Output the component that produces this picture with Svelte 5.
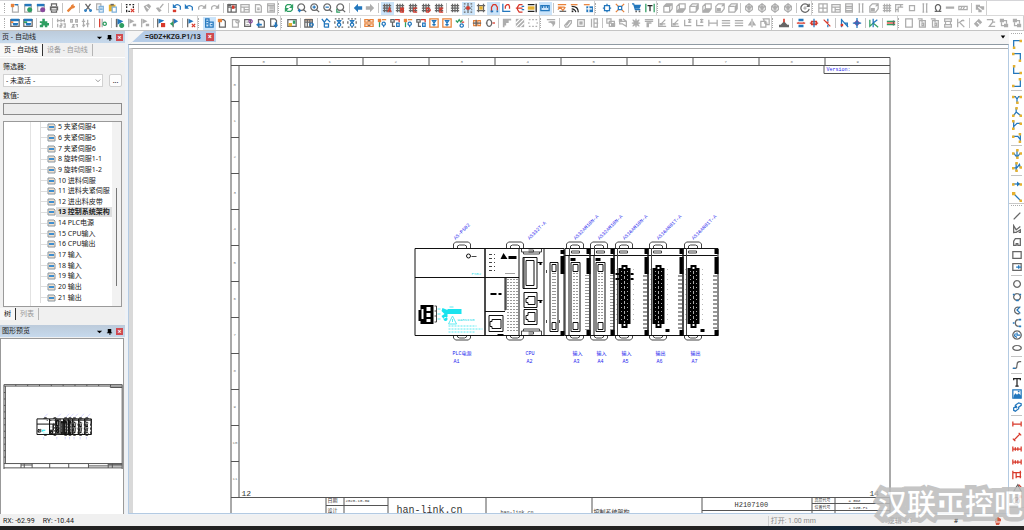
<script>
  // lower case letter = stroke, upper case = fill
  const palette = {
    b: '#2377bd', l: '#7fb2dc', g: '#adadad', d: '#666666', k: '#222222',
    r: '#d8392b', o: '#e8823a', y: '#e5b02f', n: '#2e9e62', p: '#8a4a9e', w: '#ffffff'
  };

  const grid = 'M3 1v10M6 1v10M9 1v10M1 3h10M1 6h10M1 9h10';
  const page = 'M3 2h5l2 2v7H3z';
  const glass = 'M5 1a4 4 0 1 0 .1 0M8 8l3 3';

  const icons = {
    newPage: [['g', page], ['O', 'M1 1h4v4H1z'], ['b', 'M6 2h4']],
    openPage: [['g', 'M2 2h8v9H2z'], ['B', 'M2 1h8v3H2z'], ['N', 'M8 5a3 3 0 1 0 .1 0']],
    closePage: [['g', 'M2 2h8v8H2z'], ['B', 'M1 1h9v3H1z'], ['P', 'M8 5a3 3 0 1 0 .1 0']],
    print: [['D', 'M1 4h10v5H1z'], ['d', 'M3 4V1h6v3M3 9v2h6V9'], ['w', 'M3 7h6']],
    wrench: [['y', 'M2 10l5-5'], ['O', 'M6 3l3-2v2l2 1-1 2-3 1-4 4-2-2 5-5z']],
    cut: [['d', 'M3 1l5 7M9 1L4 8'], ['b', 'M3 8a1 1 0 1 0 .1 0M9 8a1 1 0 1 0 .1 0']],
    copy: [['g', 'M2 1h5v7H2z'], ['W', 'M5 4h5v7H5z'], ['l', 'M5 4h5v7H5zM6 6h3M6 8h3']],
    paste: [['Y', 'M1 2h8v8H1z'], ['D', 'M3 1h4v2H3z'], ['W', 'M5 5h5v6H5z'], ['l', 'M5 5h5v6H5z']],
    marquee: [['k', 'M1 2h2M5 2h2M9 2h2M2 4v2M2 8v3M10 4v2M4 10h2'], ['r', 'M7 7l4 4M11 7l-4 4']],
    brush: [['G', 'M2 4l6-3 3 3-5 7-2-3z'], ['w', 'M5 4l3 3']],
    brush2: [['G', 'M1 6l3-1 4 4-3 2z'], ['g', 'M6 6l4-5']],
    undo: [['b', 'M3 5q3-4 7 0v4'], ['B', 'M1 1v6h5z']],
    undoList: [['b', 'M3 4q3-4 7 0v4'], ['B', 'M1 1v5h5z'], ['R', 'M1 8h4v3H1z']],
    redo: [['g', 'M9 5q-4-4-7 0v3'], ['G', 'M11 1v6H6z']],
    window: [['d', 'M1 2h10v9H1zM1 5h10M5 5v6'], ['D', 'M1 1h4v3H1z'], ['R', 'M6 3h3v4H6z']],
    windowOff: [['g', 'M1 2h10v9H1zM1 5h10M5 5v6M5 8h6']],
    pageOff: [['g', page], ['g', 'M5 6h3M5 8h3']],
    list: [['g', 'M2 1h8v10H2zM2 3h8M4 5h5M4 7h5M4 9h5']],
    refresh: [['n', 'M2 6V4l2-2h4l2 2M10 6v2l-2 2H4L2 8'], ['N', 'M11 1v5H6zM1 11V6h5z']],
    zoom: [['d', glass]],
    zoomWin: [['d', glass], ['b', 'M1 9h4M3 7v4']],
    zoomIn: [['d', glass], ['b', 'M3 5h4M5 3v4']],
    zoomOut: [['d', glass], ['b', 'M3 5h4']],
    zoomFit: [['d', glass], ['n', 'M1 7v4h4']],
    back: [['B', 'M1 6l5-5v3h5v4H6v3z']],
    forward: [['G', 'M11 6L6 1v3H1v4h5v3z']],
    gridA: [['d', grid], ['r', 'M7 11l2-5 2 5']],
    gridB: [['d', grid], ['r', 'M7 6h3v5H7zM7 8h3']],
    gridC: [['d', grid], ['r', 'M11 6H7v5h4']],
    gridD: [['d', grid], ['r', 'M7 6h2l2 2v1l-2 2H7z']],
    gridE: [['d', grid], ['r', 'M11 6H7v5h4M7 8h3']],
    grid: [['d', grid]],
    snap: [['d', 'M1 1h2M5 1h2M9 1h2M1 4h1M10 4h1M1 8h1M10 8h1M1 11h2M5 11h2M9 11h2M6 2v8M2 6h8'], ['R', 'M4 4h4v4H4z']],
    objSnap: [['d', 'M3 1v10M9 1v10M1 3h10M1 9h10'], ['Y', 'M4 4h4v4H4z']],
    magnet: [['r', 'M3 11V5l2-3h3l2 3v4'], ['B', 'M2 9h3v2H2zM9 9h2v2H9z']],
    ortho: [['b', 'M1 1v9h9'], ['r', 'M4 7V4l2-2h2l1 2v3']],
    clip: [['r', 'M9 2H5L3 5v3l2 3h4M1 6h8'], ['b', 'M8 4h3M8 8h3']],
    ruler: [['k', 'M1 2h8M1 10h8M11 1v10'], ['Y', 'M1 4h8v4H1z']],
    rulerBlue: [['b', 'M1 3h10v6H1zM3 3v3M6 3v3M9 3v3']],
    wave: [['o', 'M1 2h10M1 5h8M1 8l3-3 3 4 3-4'], ['d', 'M3 10h8']],
    feed: [['o', 'M1 2h8'], ['k', 'M2 4q8 0 8 7M2 7q4 0 5 4'], ['K', 'M2 9h2v2H2z']],
    table: [['B', 'M4 4h8v7H4z'], ['w', 'M4 7h7M7 4v7'], ['o', 'M1 2h7']],
    pin: [['b', 'M3 3h6v6H3zM6 1v2M6 9v2M1 6h2M9 6h2']],
    pinOut: [['o', 'M1 1l3 3M11 1L8 4M1 11l3-3M11 11L8 8'], ['b', 'M4 4h4v4H4z']],
    cart: [['B', 'M2 2h9L9 7H4z'], ['b', 'M0 1h2l2 7h6'], ['D', 'M4 9h2v2H4zM8 9h2v2H8z']],
    text: [['n', 'M1 1v10M11 1v10'], ['k', 'M3 3h6M6 3v7']],
    cube: [['g', 'M1 4l3-3h7v6l-3 4H1zM1 4h7v7M8 4l3-3'], ['G', 'M1 4l3-3h7L8 4z']],
    cubeTop: [['g', 'M1 4l3-3h7v6l-3 4H1zM4 1v6h7M1 11l3-4'], ['G', 'M1 11l3-4h7l-3 4z']],
    cubeSide: [['g', 'M1 4l3-3h7v6l-3 4H1zM1 4h7'], ['G', 'M8 4l3-3v6l-3 4z']],
    cubeFront: [['g', 'M1 4l3-3h7v6l-3 4H1zM8 4l3-3'], ['G', 'M2 6h5v4H2z']],
    hex: [['g', 'M6 1l4 3v4l-4 3-4-3V4zM2 4l4 2 4-2M6 6v5'], ['G', 'M4 4l2-2 2 2v4H4z']],
    rotate: [['d', 'M10 3a5 5 0 1 0 1 4M11 1v3H8'], ['g', 'M4 6h4M6 4v4']],
    cells: [['g', 'M1 1h10v10H1zM6 1v10M1 6h10']],
    rows: [['g', 'M2 1h8v10H2zM2 4h8M2 6h8M2 9h8']],
    bars: [['g', 'M4 1v10M8 1v10M3 1h2M7 1h2M3 11h2M7 11h2']],
    gridOff: [['g', grid]],
    angleOff: [['g', 'M11 2H2v9M11 5H5v6M8 2v3M2 8h3']],
    boxOff: [['g', 'M3 3h6v6H3z']],
    omega: [['d', 'M2 10h3L3 7V4l2-2h2l2 2v3l-2 3h3']],
    railOff: [['g', 'M1 6h10M1 5h10']],
    hatchOff: [['g', 'M1 4h10v4H1zM3 8l2-4M6 8l2-4']],
    blockOff: [['G', 'M1 2h5v2h5v4H8v3H4V8H1z'], ['w', 'M4 5l4 3']],
    cartPage: [['d', 'M1 2h10v8H1z'], ['B', 'M1 1h10v3H1zM3 6h7L9 9H4z'], ['O', 'M1 4h3v2H1z']],
    cartGreen: [['d', 'M1 2h10v8H1z'], ['B', 'M1 1h10v3H1zM3 6h7L9 9H4z'], ['N', 'M1 4h4v2H1z']],
    puzzle: [['N', 'M1 4h3V1h3v3h3v2h2v3h-2v2H7V9H5v2H1V8h2V6H1z']],
    numOff: [['g', 'M2 1v4M1 3h4M6 1v4M10 1v4M6 3h4M2 7v4M5 7h2v2H5v2h2M9 7h2v4H9']],
    dotOff: [['g', 'M2 2h2v3H2zM8 2h2v3H8zM4 8h2l-2 3h3M8 8h2v3']],
    sortOff: [['g', 'M3 1v9M1 4h4M8 2v9M6 7h4M2 8l1 2 2-2']],
    rev: [['g', 'M5 1v10'], ['r', 'M2 1v10'], ['n', 'M8 5a2 2 0 1 0 .1 0']],
    flag: [['D', 'M1 1h2v10H1z'], ['B', 'M3 1l7 3-7 4z'], ['N', 'M8 6a3 3 0 1 0 .1 0']],
    flagOff: [['g', 'M2 1v10'], ['G', 'M3 1l6 3-6 3zM7 7h4v3H7z']],
    flagRed: [['d', 'M2 1v10'], ['B', 'M3 1l7 2-7 4z'], ['R', 'M6 6h5v5H6z']],
    flagGo: [['d', 'M5 1v10'], ['B', 'M6 1l5 3-5 3z'], ['N', 'M1 7l4-3v6z']],
    flagX: [['d', 'M2 1v10'], ['B', 'M3 1l6 3-6 3z'], ['r', 'M7 7l4 4M11 7l-4 4']],
    device: [['b', 'M2 1h4v10H2zM6 5h5v6H6M3 4h2M3 7h2M8 8h2']],
    pageStar: [['d', page], ['O', 'M1 1h5v4H1z']],
    pageDot: [['g', page], ['g', 'M9 2a2 2 0 1 0 .1 0']],
    pagePurple: [['d', 'M2 2h7v8H2z'], ['p', 'M9 2a2 2 0 1 0 .1 0'], ['g', 'M4 5h3M4 8h3']],
    pageBack: [['d', page], ['B', 'M0 8l4-3v2h3v2H4v2z']],
    pageDown: [['d', 'M2 1h5l2 2v7H2z'], ['B', 'M8 12L5 8h2V5h2v3h2z']],
    image: [['d', 'M1 2h10v8H1z'], ['Y', 'M2 6h4v4H2z'], ['N', 'M7 3h3v4H7z']],
    rack: [['O', 'M1 1h9v2H1z'], ['d', 'M1 2h9v9H1zM4 2v9M7 2v9M1 5h9'], ['b', 'M9 6a2 2 0 1 0 .1 0']],
    valve: [['b', 'M1 1l3 4 3-4 4 4M4 5v6M4 7h5v4H4']],
    valveBox: [['d', 'M1 1h2M5 1h2M9 1h2M1 11h2M5 11h2M9 11h2M1 4v3M11 4v3'], ['b', 'M4 3l2 3 2-3zM6 6a2 2 0 1 0 .1 0']],
    blocks: [['o', 'M1 2h4v3H1zM7 2h4v3H7zM1 7h4v3H1zM7 7h4v3H7z'], ['d', 'M5 3h2M5 9h2']],
    tree1: [['O', 'M1 1h4v4H1z'], ['n', 'M3 5v6'], ['o', 'M6 2h5'], ['b', 'M8 5a2 2 0 1 0 .1 0M8 9v2']],
    tree2: [['d', 'M1 2h4v3H1zM3 5v5h3'], ['r', 'M6 2h5v3'], ['b', 'M8 6h3v4H8z']],
    orangeBox: [['o', 'M1 1h10v10H1z'], ['b', 'M4 3l2 3 2-3zM6 6v4M4 8h4']],
    link: [['n', 'M1 3l2 2 2-3 2 3 2-3'], ['b', 'M8 7a2 2 0 1 0 .1 0'], ['r', 'M8 5h3']],
    coil: [['o', 'M2 3h3v6H2zM7 3h3v6H7z'], ['d', 'M1 6h10M5 2v8']],
    coil2: [['d', 'M1 6h2M5 2a3 4 0 1 0 .1 0'], ['r', 'M9 6h3']],
    cornerOff: [['G', 'M1 1h10v2H8v3H5v3H3v2H1z']],
    hatch: [['G', 'M1 1h10v10H1z'], ['w', 'M1 6l5-5M1 11L11 1M6 11l5-5']],
    dashOff: [['g', 'M1 2h2M5 2h2M9 2h2M1 10h2M5 10h2M9 10h2M1 5v2M11 5v2']],
    filterOff: [['g', 'M1 2h10M3 5h7'], ['G', 'M4 4h7v3L8 11V8z']],
    clipOff: [['g', 'M2 9l5-6h3v3l-4 5H3zM4 9l4-5']],
    stackOff: [['g', 'M2 2h8v8H2z'], ['G', 'M4 4h4v4H4z']],
    pinOff: [['g', 'M3 1v10M6 1h4v10H6zM6 6h5']],
    groupOff: [['g', 'M1 1h5v5H1zM4 4h6v6H4z'], ['G', 'M6 6h5v4H6z']],
    loopOff: [['g', 'M2 2v5h4M4 4h6v6l-5-3M6 1l4 3'], ['G', 'M1 1h4v4H1z']],
    crossOff: [['g', 'M2 2l8 8M10 2l-8 8M6 1v10M1 6h10'], ['G', 'M3 3h6v6H3z']],
    alignOff: [['g', 'M1 2h10M1 4h10'], ['G', 'M3 5h6v2H6v4H3z']],
    lineOff: [['g', 'M2 1v9h9M5 7l5-5M7 7h3'], ['G', 'M3 6h4v3H3z']],
    trimOff: [['g', 'M2 2v7h8M6 2h4M6 5h4M8 1v5']],
    dimOff: [['g', 'M1 2v8M11 2v8M1 6h10']],
    parOff: [['g', 'M1 3h10M1 6h10M1 9h10']],
    mirrorOff: [['g', 'M6 1v10'], ['G', 'M1 9l4-6v6zM11 9L7 3v6z']],
    dupOff: [['g', 'M1 4h6v7H1zM4 1h7v7H7zM5 6h4']],
    mount: [['D', 'M0 8h12v3H0zM2 8l4-4 4 4z'], ['R', 'M5 1h2v4H5z']],
    wire: [['B', 'M3 1h6v3H3zM3 8h6v3H3z'], ['r', 'M1 6h10M3 5v2M9 5v2']],
    wireRed: [['r', 'M1 6h10M3 4h6v4H3z'], ['b', 'M6 1v10']],
    wireX: [['r', 'M2 2l8 8M5 5h3'], ['b', 'M7 1v3M7 8v3']],
    cable: [['b', 'M3 1v10M3 2l8 9M6 6h4v4'], ['R', 'M2 7h3v3H2z']],
    diamond: [['P', 'M6 2l4 4-4 4-4-4z'], ['b', 'M6 0v12M1 6h10']],
    harness: [['n', 'M1 2v8l4-4 6 5'], ['b', 'M5 1v10M5 6l5-4']],
    rail: [['n', 'M1 4h10M1 8h10'], ['r', 'M1 6h10'], ['d', 'M9 3v6']],
    sheetOff: [['g', 'M2 1h8v10H2z']],
    pageLOff: [['g', 'M3 3h7v8H3zM1 1h5v4M6 6h2v3H6z']],
    noteOff: [['g', 'M2 1h8v3H2zM3 4h6v4H3zM2 8h8v3H2z']],
    cutOff: [['g', 'M2 1v10M3 6l6-4M5 6l5 5M6 3h4']],
    tagOff: [['G', 'M1 7l6-6 4 4-6 6z'], ['w', 'M5 5l3 3']],
    treeOff: [['g', 'M1 2h7v3l-4 5h7M8 5h3']],
    nodesOff: [['G', 'M1 1h5v4H1zM6 7h5v4H6z'], ['g', 'M6 3h3v4M3 5v4h3']],
    // vertical bar
    cornerTL: [['b', 'M2 11V2h9'], ['Y', 'M1 9h3v3H1zM9 1h3v3H9z']],
    cornerTR: [['b', 'M1 2h9v9'], ['Y', 'M0 1h3v3H0zM8 9h3v3H8z']],
    cornerBL: [['b', 'M2 1v9h9'], ['Y', 'M1 0h3v3H1zM9 8h3v3H9z']],
    cornerBR: [['b', 'M1 10h9V1'], ['Y', 'M0 8h3v3H0zM8 0h3v3H8z']],
    teeDown: [['b', 'M2 3h2l2 3 2-3h2M6 6v5'], ['Y', 'M0 2h3v3H0zM9 2h3v3H9zM5 9h3v3H5z']],
    teeUp: [['b', 'M5 1v5l5 4M5 6l-3 4'], ['Y', 'M4 0h3v3H4zM0 9h3v3H0zM9 9h3v3H9z']],
    teeRight: [['b', 'M2 1v10M2 8l4-4h5'], ['Y', 'M0 0h3v3H0zM9 3h3v3H9zM0 9h3v3H0z']],
    teeLeft: [['b', 'M10 1v10M10 8L7 4H1'], ['Y', 'M0 3h3v3H0zM8 0h3v3H8zM8 9h3v3H8z']],
    downArrow: [['b', 'M6 1v8M2 5l4 5 4-5'], ['Y', 'M5 0h3v3H5zM0 4h3v3H0zM9 4h3v3H9zM5 9h3v3H5z']],
    jump: [['b', 'M5 1v10M5 8l4-5 1 4M2 7h3'], ['Y', 'M4 0h3v3H4zM0 6h3v3H0zM9 5h3v3H9zM4 9h3v3H4z']],
    rightArrow: [['b', 'M1 6h9'], ['B', 'M6 3l4 3-4 3z'], ['Y', 'M0 5h3v3H0zM9 5h3v3H9z']],
    diagonal: [['b', 'M2 2l8 8'], ['Y', 'M0 0h4v4H0zM9 9h3v3H9z']],
    line: [['d', 'M2 10l8-8']],
    polyline: [['d', 'M2 11V2l3 5 5-4M2 10h3l5-3v3H8']],
    polygon: [['d', 'M4 2h6v8H7V8H5v2H2V5z']],
    rect: [['d', 'M1 2h10v8H1z']],
    rectCenter: [['d', 'M1 2h10v8H1z'], ['b', 'M5 6h6M8 4v4']],
    circle: [['d', 'M6 2a4 4 0 1 0 .1 0']],
    circle3: [['d', 'M6 2a4 4 0 1 0 .1 0'], ['B', 'M1 2h2v2H1zM9 2h2v2H9zM5 9h3v2H5z']],
    arcC: [['d', 'M9 3a4 4 0 1 0 0 7'], ['b', 'M10 2L6 6l4 4']],
    arc: [['d', 'M8 2a4 4 0 1 0 0 8'], ['B', 'M8 1h3v2H8zM8 9h3v2H8zM1 5h2v2H1z']],
    sector: [['d', 'M6 1a5 5 0 1 0 .1 0'], ['b', 'M6 3v3h4M4 4l-1 3 3 2']],
    ellipse: [['d', 'M6 3a5 3 0 1 0 .1 0']],
    spline: [['d', 'M1 10h3q2 0 2-4t3-4h2'], ['b', 'M1 10h3']],
    letterT: [['k', 'M2 4V2h8v2M6 2v9M4 11h4']],
    picture: [['b', 'M1 1h10v10H1z'], ['B', 'M2 8l2-3 2 2 2-2 3 3v3H2zM7 2h2v2H7z']],
    chain: [['b', 'M6 5L2 7v3l2 1 4-3V6M6 7L4 6V4l4-3 3 1v2L7 7']],
    dim: [['r', 'M1 3v6M11 3v6M1 6h10']],
    dimSlant: [['r', 'M2 10l8-8M1 8l3 3M8 1l3 3']],
    dimCont: [['r', 'M1 3v6M11 3v6M1 6h10M4 4v4M7 4v4']],
    dimStep: [['r', 'M1 1v10M1 3h10M5 3v7M5 8h6M10 1v9']],
    dimAngle: [['d', 'M2 10l5-8 4 8z'], ['r', 'M8 2l3 3']],
    dimRadius: [['d', 'M5 3a4 4 0 1 0 .1 0'], ['r', 'M5 7l6-6M8 1h3v3']]
  };

  // "|" is a separator, a leading "*" marks a pressed button
  const rowOne = [
    'newPage openPage closePage print | wrench | cut copy paste | marquee | brush brush2 | undoList undo redo redo | window windowOff pageOff list',
    'refresh zoomWin zoomIn zoomOut zoomFit | back forward | *gridA gridB gridC gridD gridE | grid *snap objSnap *magnet ortho clip ruler *rulerBlue | wave feed table',
    'pin pinOut | cart text',
    'cube cubeTop cubeSide cubeTop cubeFront cubeSide | hex hex hex hex | rotate',
    'cells windowOff rows bars cubeFront gridOff angleOff boxOff bars omega railOff hatchOff | blockOff'
  ];
  const rowTwo = [
    'cartPage cartGreen | puzzle | numOff dotOff sortOff | rev | flag flagOff flagOff | flagRed flagGo | flagX',
    '*device pageStar pageDot pagePurple pageBack pageDown',
    'image | rack | valve valveBox valveBox | blocks tree1 tree2 tree1 tree2 orangeBox orangeBox link | coil coil2 | cornerOff hatch dashOff',
    'filterOff | clipOff stackOff pinOff | groupOff loopOff crossOff alignOff lineOff lineOff trimOff trimOff dimOff parOff parOff mirrorOff dupOff',
    'mount | wire wireRed wireX | cable diamond | harness | rail',
    'sheetOff pageLOff pageLOff noteOff cutOff | tagOff treeOff nodesOff nodesOff'
  ];
  const sideBar = [
    'cornerTL cornerTR cornerBL cornerBR | teeDown teeUp teeRight teeLeft | downArrow jump | rightArrow diagonal',
    'line polyline polygon rect rectCenter | circle circle3 arcC arc sector ellipse | spline | letterT picture chain | dim dimSlant dimCont dimCont dimStep dimAngle dimRadius'
  ];

  const pages = [
    '5 夹紧伺服4', '6 夹紧伺服5', '7 夹紧伺服6', '8 旋转伺服1-1', '9 旋转伺服1-2',
    '10 进料伺服', '11 进料夹紧伺服', '12 进出料皮带', '13 控制系统架构', '14 PLC电源',
    '15 CPU输入', '16 CPU输出', '17 输入', '18 输入', '19 输入', '20 输出', '21 输出'
  ];
  let selected = $state('13 控制系统架构');
  let filter = $state('- 未激活 -');
  let value = $state('');

  const hooks = [453, 506, 566, 590, 615, 649, 684];
  const narrow = [{ x: 564, w: 25 }, { x: 589, w: 24 }];
  const wide = [{ x: 613, w: 34 }, { x: 647, w: 35 }, { x: 682, w: 35 }];
  const tags = [
    { x: 452, tx: 455, type: 'AS-PS02', name: 'PLC电源', ref: 'A1' },
    { x: 525, tx: 529, type: 'AS332T-A', name: 'CPU', ref: 'A2' },
    { x: 572, tx: 575, type: 'AS32AM10N-A', name: '输入', ref: 'A3' },
    { x: 596, tx: 599, type: 'AS32AM10N-A', name: '输入', ref: 'A4' },
    { x: 621, tx: 624, type: 'AS16AM10N-A', name: '输入', ref: 'A5' },
    { x: 655, tx: 658, type: 'AS16AN01T-A', name: '输出', ref: 'A6' },
    { x: 690, tx: 693, type: 'AS16AN01T-A', name: '输出', ref: 'A7' }
  ];
  const ten = [0, 1, 2, 3, 4, 5, 6, 7, 8, 9];
  const twelve = [...ten, 10, 11];
</script>

{#snippet icon(name)}
  <svg class="icon" viewBox="0 0 12 12" aria-hidden="true">
    {#each icons[name] as [tone, d]}
      {@const color = palette[tone.toLowerCase()]}
      {@const filled = tone !== tone.toLowerCase()}
      <path {d} fill={filled ? color : 'none'} stroke={filled ? 'none' : color} />
    {/each}
  </svg>
{/snippet}

{#snippet toolbar(items)}
  <div class="toolbar" role="toolbar">
    <span class="grip"></span>
    {#each items.split(' ') as item}
      {#if item === '|'}
        <span class="sep"></span>
      {:else}
        <button class="tool" class:on={item[0] === '*'} aria-label={item.replace('*', '')}>
          {@render icon(item.replace('*', ''))}
        </button>
      {/if}
    {/each}
  </div>
{/snippet}

{#snippet titleBar(title)}
  <div class="title-bar">
    <h2>{title}</h2>
    <button aria-label="menu"><svg viewBox="0 0 8 8"><path d="M1 3h6L4 6z" /></svg></button>
    <button aria-label="pin"><svg viewBox="0 0 8 8"><path d="M2 1h4v4H2zM1 5h6v1H1zM4 6h1v2H4z" /></svg></button>
    <button class="close" aria-label="close">×</button>
  </div>
{/snippet}

{#snippet plan()}
  <g class="frame">
    <path d="M230.5 530V57.5h659V530M230.5 65.5h659M238.5 65.5v432M230.5 497.5h659M823.5 65.5v8h66" />
    {#each ten.slice(1) as n}
      <path d="M{230.5 + n * 66} 57.5v8" />
    {/each}
    {#each twelve.slice(1) as n}
      <path d="M230.5 {65.5 + n * 36}h8" />
    {/each}
    <path d="M325.5 497v25M343.5 497v25M387.5 497v25M485.5 497v25M591.5 497v25M701.5 497v25M811.5 497v25M834.5 497v25M325.5 505.5h62M811.5 503.5h78M701.5 510.5h188M230.5 521.5h659" />
  </g>

  <g class="plc">
    {#each hooks as x}
      <path class="thin" d="M{x} 248v-4l2-2h13l2 2v4M{x + 4} 248v-2l2-1h5l2 1v2M{x} 335v3l2 2h13l2-2v-3M{x + 4} 335v2l2 1h5l2-1v-2" />
    {/each}
    <!-- power supply -->
    <path d="M414.5 248.5h70v87h-70zM414.5 277.5h70" />
    <circle cx="468" cy="256" r="2" />
    <path class="thin" d="M471 256.5h5" />
    <path class="solid" d="M420 305h13v19h-13v-3h-2v-11h2z" />
    <path class="hole" d="M426 307h4v4h-4zM426 313h4v4h-4zM426 319h4v3h-4zM421 309h2v10h-2z" />
    <path class="thin" d="M434 306h2v16h-2M434 311h2M434 316h2" />
    <!-- cpu -->
    <path d="M484.5 248.5h34v87h-34zM484.5 277.5h34M504.5 277.5v33M484.5 311.5h20M505.5 277v33" />
    <path class="solid" d="M503 253l4 6h-7zM508 256h8v3h-8zM490 293h6v2h-6zM498 293h3v2h-3zM497 334h6v2h-6z" />
    <path class="thin" stroke-dasharray="1 3" d="M489 254v19M490 254v19M491 254v19M494 254v19" />
    <path class="thin" stroke-dasharray="1 1" d="M505 273.5h9" />
    <path stroke-dasharray="1 2" class="pins" d="M507.5 279v54M510.5 279v54M513.5 279v54M516.5 279v54" />
    <path d="M488.5 315.5h14v16h-14zM491.5 319.5h9v9h-9v-2h-2v-5h2z" />
    <path d="M518.5 248.5h45v87h-45M543.5 248v87" />
    <path class="thin" d="M521 249v3h20v-3M523 252v2h16v-2M521 335v-4h20v4M523 331v-2h16v2M528 250h5v2h-5M528 332h5v2h-5" />
    <path d="M522.5 257.5h14v31h-14zM525.5 260.5h8v25h-8zM523.5 257.5v31" />
    <path d="M523.5 292.5h13v15h-13zM527.5 296.5h7v8h-7v-2h-2v-4h2zM523.5 309.5h13v15h-13zM527.5 312.5h7v9h-7v-2h-2v-4h2z" />
    <path class="solid" d="M537 262h5v1h-5zM539 262h2v3h-2zM537 300h5v1h-5zM539 300h2v3h-2zM560 250h4v4h-4zM560 256h4v18h-4zM560 331h4v5h-4z" />
    <path d="M549.5 262.5h8v69h-8zM551.5 264.5h4v7h-4zM551.5 322.5h4v7h-4z" />
    <path class="pins" stroke-dasharray="1 2" d="M552.5 273v48M554.5 273v48" />
    <path class="thin" d="M546 270v3M546 320v3M559 320v3" />

    {#each narrow as m}
      <path d="M{m.x}.5 248.5h{m.w}v87h-{m.w}zM{m.x} 255.5h{m.w}M{m.x + 4}.5 255v80" />
      <path class="thin" d="M{m.x + 5} 248v7M{m.x + 7} 251h8v2h-8z" />
      <path d="M{m.x + 6}.5 262.5h9v69h-9zM{m.x + 8}.5 264.5h5v7h-5zM{m.x + 8}.5 322.5h5v7h-5z" />
      <path class="pins" stroke-dasharray="1 2" d="M{m.x + 9}.5 273v48M{m.x + 12}.5 273v48M{m.x + 21}.5 275v56M{m.x + 23}.5 275v56" />
      <path class="solid" d="M{m.x + 6} 258h5v3h-5zM{m.x + m.w - 3} 249h4v5h-4zM{m.x + m.w - 3} 258h4v16h-4zM{m.x + m.w - 3} 330h4v6h-4z" />
    {/each}

    {#each wide as m, i}
      <path d="M{m.x}.5 248.5h{m.w}v87h-{m.w}zM{m.x} 255.5h{m.w}" />
      <path class="thin" d="M{m.x + 4} 248v87M{m.x + 6} 251h8v2h-8z" />
      <path class="faint" stroke-dasharray="1 4" d="M{m.x + 3} 269v54M{m.x + 20} 269v54" />
      <path class="solid" d="M{m.x + 8} 265h6v3h3v56h-3v4h-6v-4H{m.x + 5}v-56h3z" />
      <path class="gaps" stroke-dasharray="1 3" d="M{m.x + 8} 271v52M{m.x + 14} 271v52" />
      <path class="hole" d="M{m.x + 10} 267h2v2h-2zM{m.x + 10} 324h2v2h-2z" />
      <path class="gaps" stroke-dasharray="3 2" d="M{m.x + 11} 271v52" />
      <path class="pins" stroke-dasharray="2 2" d="M{m.x + m.w - 4}.5 275v56M{m.x + m.w - 2}.5 275v56" />
      <path class="solid" d="M{m.x + m.w - 3} 249h4v5h-4zM{m.x + m.w - 3} 257h4v17h-4zM{m.x + m.w - 3} 330h4v6h-4z" />
      {#if i === 0}
        <path class="solid" d="M{m.x + 2} 273h4v2h-4zM{m.x + 2} 278h4v2h-4zM{m.x + 17} 273h3v2h-3zM{m.x + 17} 278h3v2h-3z" />
      {:else}
        <path class="solid" d="M{m.x + 18} 329h4v3h-4z" />
      {/if}
    {/each}
  </g>

  <g class="cyan">
    <path d="M442 308l5 2v7l-4 2-2-3 3-2-3-3zM447 309h14v5h-14zM445 317a2 2 0 1 0 .1 0" />
    <path class="outline" d="M452 316l4 8h-8zM452 319v3M437 309h3M437 314h3M437 319h3M449 307h4" />
    <path class="outline" stroke-dasharray="2 1" d="M448 326h28M448 329h34M448 332h26" />
  </g>
{/snippet}

<div class="app">
  <div class="bar bar-one">
    {#each rowOne as items}
      {@render toolbar(items)}
    {/each}
  </div>
  <div class="bar bar-two">
    {#each rowTwo as items}
      {@render toolbar(items)}
    {/each}
  </div>

  <main>
    <aside>
      <section class="panel">
        {@render titleBar('页 - 自动线')}
        <div class="tabs">
          <button class="active">页 - 自动线</button>
          <button>设备 - 自动线</button>
        </div>
        <div class="panel-body">
          <label for="filter">筛选器:</label>
          <div class="filter-row">
            <div class="select-box">
              <select id="filter" bind:value={filter}>
                <option>- 未激活 -</option>
              </select>
              <svg viewBox="0 0 8 8" aria-hidden="true"><path d="M1 2l3 3 3-3" /></svg>
            </div>
            <button class="more">...</button>
          </div>
          <label for="value">数值:</label>
          <input id="value" type="text" bind:value />
          <div class="tree-box">
            <ul>
              {#each pages as name}
                <li>
                  <svg viewBox="0 0 9 8" aria-hidden="true">
                    <path d="M1 1h6l1 1v5H1z" fill="#f3e2cf" stroke="#8a97a1" />
                    <path d="M2 3h5v2H2z" fill="#3f8fd0" />
                  </svg>
                  <button class:selected={selected === name} onclick={() => (selected = name)}>{name}</button>
                </li>
              {/each}
            </ul>
            <div class="scrollbar"><span></span></div>
          </div>
          <div class="tabs bottom">
            <button class="active">树</button>
            <button>列表</button>
          </div>
        </div>
      </section>

      <section class="panel">
        {@render titleBar('图形预览')}
        <div class="preview">
          <svg viewBox="214 54 680 472">
            {@render plan()}
            {#each tags as tag}
              <path class="tag-line" d="M{tag.tx} 239l20-20M{tag.x} 350v12" />
            {/each}
          </svg>
        </div>
      </section>
    </aside>

    <div class="document">
      <div class="doc-strip">
        <div class="doc-tab">
          <span>=GDZ+KZG.P1/13</span>
          <button class="close" aria-label="close">×</button>
        </div>
        <button class="doc-menu" aria-label="pages"><svg viewBox="0 0 8 8"><path d="M1 2h6L4 6z" /></svg></button>
      </div>
      <div class="canvas">
        <svg viewBox="133 49 874 464">
          {@render plan()}
          <g class="numbers">
            {#each ten as n}
              <text x={262 + n * 66} y="63">{n}</text>
            {/each}
            {#each twelve as n}
              <text x={n > 9 ? 232 : 233} y={86 + n * 36 - (n > 4 ? 2 : 0)}>{n}</text>
            {/each}
          </g>
          <g class="ink">
            <text x="241" y="496" font-size="8">12</text>
            <text x="869" y="496" font-size="8">14</text>
            <text x="327" y="502" font-size="5">日期</text>
            <text x="345" y="502" font-size="4">2020-10-09</text>
            <text x="327" y="512" font-size="5">设计</text>
            <text x="396" y="513" font-size="10">han-link.cn</text>
            <text x="500" y="514" font-size="5">han-link.cn</text>
            <text x="593" y="514" font-size="6">控制系统架构</text>
            <text x="734" y="507" font-size="7">H2107100</text>
            <text x="814" y="502" font-size="4">高层代号</text>
            <text x="848" y="502" font-size="4">= GDZ</text>
            <text x="814" y="509" font-size="4">位置代号</text>
            <text x="848" y="509" font-size="4">+ KZG.P1</text>
          </g>
          <g class="blue">
            <text x="826" y="71">Version:</text>
            {#each tags as tag}
              <text transform="translate({tag.tx} 240) rotate(-45)">{tag.type}</text>
              <text x={tag.x} y="355">{tag.name}</text>
              <text x={tag.x + 1} y="363">{tag.ref}</text>
            {/each}
          </g>
          <text class="warn" x="457" y="321">WARNING</text>
          <text class="warn" x="471" y="275">PS02</text>
        </svg>
      </div>
    </div>

    <div class="side-bar">
      {#each sideBar as items}
        {@render toolbar(items)}
      {/each}
    </div>
  </main>

  <footer>
    <span>RX: -62.99</span>
    <span>RY: -10.44</span>
    <span class="scale">打开: 1.00 mm</span>
    <span class="ratio">逻辑 1:1</span>
    <span class="mark">#</span>
    <svg viewBox="0 0 8 8" aria-hidden="true"><path d="M1 2l3-2 3 2v2l-2 4H2z" fill="#d4553f" /><path d="M2 5h5" stroke="#fff" /></svg>
  </footer>
  <div class="desktop"></div>
  <div class="watermark">汉联工控吧</div>
</div>

<style>
  :global(body) {
    margin: 0;
  }

  .app {
    position: relative;
    display: grid;
    grid-template-rows: 16px 15px minmax(0, 1fr) 11px 4px;
    height: 100vh;
    overflow: hidden;
    background: #f0f0f0;
    color: #222;
    font: 7px/10px 'Noto Sans', 'Noto Sans CJK SC', sans-serif;
  }

  button,
  select,
  input {
    margin: 0;
    padding: 0;
    border: 0;
    background: none;
    color: inherit;
    font: inherit;
  }

  /* toolbars */
  .bar {
    display: grid;
    background: #fff;
  }

  .bar-one {
    box-sizing: border-box;
    grid-template-columns: 274fr 317fr 62fr 155fr 175fr 37fr;
    padding-left: 4px;
    border-top: 1px solid #d5d5d8;
    border-bottom: 1px solid #d9d9d9;
  }

  .bar-two {
    grid-template-columns: 194fr 83fr 259fr 232fr 126fr 126fr;
    padding-left: 4px;
    border-bottom: 1px solid #c4c4c4;
  }

  .toolbar {
    display: flex;
    align-items: center;
    min-width: 0;
    border-right: 1px solid #d0d0d0;
  }

  .grip {
    flex: 4 1 0;
    align-self: stretch;
    margin: 2px 0;
    border-left: 1px dotted #aaa;
  }

  .sep {
    flex: 4 1 0;
    height: 10px;
    background: linear-gradient(#c4c4c4, #c4c4c4) center / 1px 100% no-repeat;
  }

  .tool {
    display: flex;
    flex: 13 1 0;
    align-items: center;
    justify-content: center;
    min-width: 0;
    height: 13px;
  }

  .tool.on {
    background: #cbe4fa;
  }

  .icon {
    flex: none;
    width: 10px;
    height: 10px;
    stroke-width: 1.5;
  }

  main {
    display: grid;
    grid-template-columns: 125px minmax(0, 1fr) 15px;
    background: #eef2f7;
  }

  /* left side */
  aside {
    display: grid;
    grid-template-rows: 294fr 190fr;
    min-height: 0;
  }

  .panel {
    display: flex;
    flex-direction: column;
    min-height: 0;
    background: #f0f0f0;
  }

  .title-bar {
    display: flex;
    align-items: center;
    gap: 3px;
    height: 12px;
    padding: 0 2px;
    background: linear-gradient(#bccbdb, #c6d9ec);
  }

  h2 {
    flex: 1;
    margin: 0;
    font-size: 7px;
    font-weight: 400;
  }

  .title-bar button {
    display: flex;
    align-items: center;
    justify-content: center;
    width: 7px;
    height: 7px;
  }

  .title-bar svg {
    width: 7px;
    height: 7px;
  }

  .close,
  .title-bar .close {
    background: #cf4a50;
    color: #fff;
    font-weight: 700;
    line-height: 7px;
  }

  .tabs {
    display: flex;
    height: 14px;
    align-items: center;
  }

  .tabs button {
    height: 12px;
    padding: 0 4px;
    border-right: 1px solid #b5b5b5;
    color: #999;
  }

  .tabs button.active {
    border-right-color: #333;
    background: #f8f8f8;
    color: #111;
  }

  .panel-body {
    display: flex;
    flex: 1;
    flex-direction: column;
    min-height: 0;
    padding: 4px 3px 5px;
    border-top: 1px solid #fff;
  }

  .filter-row {
    display: flex;
    gap: 6px;
    margin: 2px 0 4px;
  }

  .select-box {
    position: relative;
    flex: 1;
  }

  select {
    box-sizing: border-box;
    width: 100%;
    height: 13px;
    padding: 0 2px;
    border: 1px solid #d2d2d2;
    background: #fff;
    appearance: none;
  }

  .select-box svg {
    position: absolute;
    top: 4px;
    right: 2px;
    width: 6px;
    height: 6px;
    fill: none;
    stroke: #777;
    pointer-events: none;
  }

  .more {
    box-sizing: border-box;
    width: 13px;
    height: 13px;
    border: 1px solid #cfcfcf;
    border-radius: 2px;
    background: #fdfdfd;
    line-height: 7px;
  }

  input {
    box-sizing: border-box;
    height: 12px;
    margin: 2px 0 6px;
    border: 1px solid #8b8b8b;
    background: #ececec;
  }

  .tree-box {
    display: flex;
    flex: 1;
    min-height: 0;
    border: 1px solid #9a9a9a;
    background: #fff;
  }

  ul {
    display: flex;
    flex: 1;
    flex-direction: column;
    min-width: 0;
    margin: 0 0 0 26px;
    padding: 0 0 3px;
    border-left: 1px solid #e2e2e2;
    list-style: none;
  }

  li {
    display: flex;
    flex: 1;
    align-items: center;
    min-height: 0;
    margin-left: 9px;
    border-left: 1px solid #ddd;
  }

  li::before {
    width: 6px;
    border-top: 1px solid #ddd;
    content: '';
  }

  li svg {
    flex: none;
    width: 9px;
    height: 8px;
  }

  li button {
    padding: 0 2px;
    line-height: 10px;
    text-align: left;
    white-space: nowrap;
  }

  li button.selected {
    background: #dedede;
    font-weight: 700;
  }

  .scrollbar {
    display: grid;
    grid-template-rows: 66fr 97fr 20fr;
    width: 9px;
    background: #f2f2f2;
  }

  .scrollbar span {
    grid-row: 2;
    justify-self: center;
    width: 1px;
    background: #777;
  }

  .bottom {
    height: 13px;
    margin-left: -3px;
  }

  .preview {
    display: flex;
    flex: 1;
    min-height: 0;
    align-items: center;
    margin: 1px 1px 1px 0;
    border: 1px solid #999;
    border-bottom: 0;
    background: #fff;
  }

  .preview svg {
    width: 100%;
  }

  .preview :is(.frame, .plc) path {
    vector-effect: non-scaling-stroke;
  }

  .tag-line {
    fill: none;
    stroke: #9a9aff;
    stroke-width: 3;
    stroke-dasharray: 5 2;
  }

  /* document */
  .document {
    display: flex;
    flex-direction: column;
    min-width: 0;
    min-height: 0;
    padding: 0 0 1px 3px;
    background: #eef2f7;
  }

  .doc-strip {
    display: flex;
    justify-content: space-between;
    height: 13px;
    background: #f5f5f5;
  }

  .doc-tab {
    display: flex;
    align-items: center;
    gap: 5px;
    height: 11px;
    padding: 0 2px 0 17px;
    border-bottom: 2px solid #f5f5f5;
    background: #b5cce7;
    clip-path: polygon(16px 0, 100% 0, 100% 100%, 2px 100%);
    font-family: Roboto, sans-serif;
    font-weight: 700;
  }

  .doc-tab .close {
    width: 8px;
    height: 8px;
    line-height: 8px;
  }

  .doc-menu {
    width: 12px;
  }

  .doc-menu svg {
    width: 6px;
    height: 6px;
  }

  .canvas {
    flex: 1;
    min-height: 0;
    padding: 3px 0 0;
    border: solid #b3cae2;
    border-width: 1px;
    border-top-color: #8f9aa3;
    background: #fff;
  }

  .canvas > svg {
    box-sizing: border-box;
    display: block;
    width: 100%;
    height: 100%;
    border-top: 1px solid #aaa;
    border-left: 4px solid #d9d9d9;
  }

  .frame path {
    fill: none;
    stroke: #555;
  }

  .plc path,
  .plc circle {
    fill: none;
    stroke: #111;
  }

  .plc .thin {
    stroke: #444;
  }

  .plc .faint {
    stroke: #bbb;
  }

  .plc .solid {
    fill: #000;
    stroke: none;
  }

  .plc .hole {
    fill: #fff;
    stroke: none;
  }

  .plc .pins {
    stroke: #333;
  }

  .plc .gaps {
    stroke: #aaa;
  }

  .cyan path {
    fill: #19e3ee;
  }

  .cyan .outline {
    fill: none;
    stroke: #5cebf2;
  }

  .canvas text {
    font-family: 'Liberation Mono', 'Noto Sans CJK SC', monospace;
  }

  .numbers {
    fill: #777;
    font-size: 4px;
  }

  .ink {
    fill: #333;
  }

  .blue {
    fill: #1c1cee;
    font-size: 5px;
  }

  .warn {
    fill: #2fe0ea;
    font-size: 4px;
  }

  .side-bar {
    display: grid;
    grid-template-rows: 172fr 304fr;
    padding: 1px 0 7px;
    background: #fff;
  }

  .side-bar .toolbar {
    flex-direction: column;
    border-right: 0;
    border-bottom: 1px solid #c8c8c8;
  }

  .side-bar .tool {
    width: 13px;
    min-height: 0;
  }

  .side-bar .grip {
    margin: 1px 2px 0;
    border-top: 1px dotted #aaa;
    border-left: 0;
  }

  .side-bar .sep {
    width: 11px;
    height: auto;
    background: linear-gradient(#c4c4c4, #c4c4c4) center / 100% 1px no-repeat;
  }

  /* status */
  footer {
    display: flex;
    align-items: center;
    gap: 8px;
    padding-left: 3px;
    background: #f0f0f0;
    font-family: Roboto, 'Noto Sans CJK SC', sans-serif;
  }

  .scale {
    width: 109px;
    margin-left: auto;
    padding-left: 2px;
    border-left: 1px solid #d0d0d0;
    color: #888;
  }

  .ratio {
    width: 58px;
    color: #999;
  }

  footer svg {
    width: 8px;
    height: 8px;
    margin: 0 22px 0 28px;
  }

  .desktop {
    background: linear-gradient(90deg, #222, #252322 70%, #14283c 82%, #262626 90%);
  }

  .watermark {
    position: absolute;
    right: 1px;
    bottom: 8px;
    color: #fff;
    font: 500 29px/40px 'Noto Sans CJK SC', sans-serif;
    opacity: 0.85;
    paint-order: stroke fill;
    stroke-linejoin: round;
    -webkit-text-stroke: 9px #bcbcbc;
    pointer-events: none;
  }
</style>
